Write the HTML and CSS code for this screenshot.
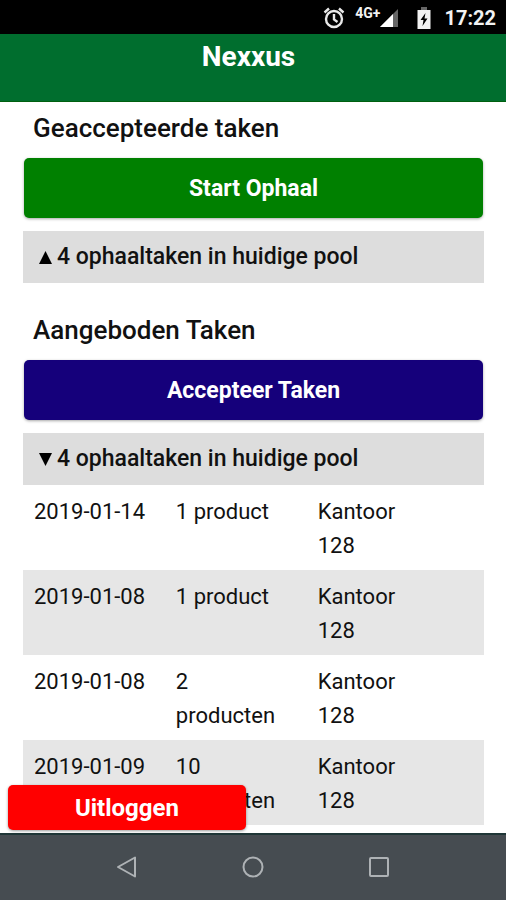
FILE: index.html
```html
<!DOCTYPE html>
<html lang="nl">
<head>
<meta charset="utf-8">
<meta name="viewport" content="width=device-width, initial-scale=1">
<title>Nexxus</title>
<link rel="stylesheet" href="styles.css">
</head>
<body>
<div class="status-bar">
  <svg class="icon-alarm" viewBox="0 0 22 22" width="22" height="22" fill="none" stroke="#e8e8e8" stroke-width="2.400" aria-hidden="true">
    <circle cx="11" cy="12" r="8"/>
    <path d="M11 7v5.500l3.500 2.500M1.500 5.500l4.500-4M20.500 5.500l-4.500-4"/>
  </svg>
  <span class="network">4G+</span>
  <svg class="icon-signal" viewBox="0 0 18 18" width="18" height="18" aria-hidden="true">
    <path d="M0 18L18 0v18z" fill="#666"/>
    <path d="M0 18L13 5v13z" fill="#fff"/>
  </svg>
  <svg class="icon-battery" viewBox="0 0 14 22" width="14" height="22" aria-hidden="true">
    <path d="M4 0h6v3H4z" fill="#666"/>
    <path d="M.5 3h13v19H.5z" fill="#f2f2f2"/>
    <path d="M8.500 6L3.500 13H6.500L5.500 19L10.500 11.500H7.500z" fill="#000"/>
  </svg>
  <time class="clock">17:22</time>
</div>
<header class="app-header"><h1>Nexxus</h1></header>
<div class="screen">
  <main class="content">
    <section class="group">
      <h2>Geaccepteerde taken</h2>
      <button class="action action-start" type="button">Start Ophaal</button>
      <details class="pool">
        <summary><svg viewBox="0 0 13 13" width="13" height="13" aria-hidden="true"><path d="M6.500 0L13 13H0z"/></svg>4 ophaaltaken in huidige pool</summary>
      </details>
    </section>
    <section class="group">
      <h2>Aangeboden Taken</h2>
      <button class="action action-accept" type="button">Accepteer Taken</button>
      <details class="pool" open>
        <summary><svg viewBox="0 0 13 13" width="13" height="13" aria-hidden="true"><path d="M0 0h13L6.500 13z"/></svg>4 ophaaltaken in huidige pool</summary>
        <table class="tasks">
          <tbody>
            <tr><td>2019-01-14</td><td>1 product</td><td>Kantoor 128</td></tr>
            <tr><td>2019-01-08</td><td>1 product</td><td>Kantoor 128</td></tr>
            <tr><td>2019-01-08</td><td>2 producten</td><td>Kantoor 128</td></tr>
            <tr><td>2019-01-09</td><td>10 producten</td><td>Kantoor 128</td></tr>
          </tbody>
        </table>
      </details>
    </section>
  </main>
  <button class="logout" type="button">Uitloggen</button>
</div>
<nav class="system-nav" aria-label="Systeem">
  <button type="button" aria-label="Terug"><svg viewBox="0 0 22 22" width="22" height="22"><path d="M19 1.500v19L2 11z"/></svg></button>
  <button type="button" aria-label="Start"><svg viewBox="0 0 22 22" width="22" height="22"><circle cx="11" cy="11" r="9.500"/></svg></button>
  <button type="button" aria-label="Recent"><svg viewBox="0 0 22 22" width="22" height="22"><rect x="2" y="2" width="18" height="18" rx="1"/></svg></button>
</nav>
</body>
</html>
```
FILE: styles.css
```css
* {
  box-sizing: border-box;
}

body {
  display: flex;
  flex-direction: column;
  height: 100vh;
  margin: 0;
  overflow: hidden;
  background: #fff;
  color: #111;
  font-family: Roboto, "Liberation Sans", sans-serif;
  font-size: 22px;
}

button {
  border: 0;
  font-family: inherit;
  cursor: pointer;
}

.status-bar {
  display: flex;
  flex: none;
  align-items: center;
  justify-content: flex-end;
  height: 34px;
  padding: 2px 10px 0;
  background: #000;
  color: #f2f2f2;
}

.network {
  align-self: flex-start;
  margin-left: 10px;
  padding-top: 3px;
  font-size: 14px;
  font-weight: 700;
  line-height: 16px;
}

.icon-signal {
  align-self: flex-end;
  margin-bottom: 7px;
}

.icon-battery {
  margin: 0 13px 0 19px;
}

.clock {
  font-size: 20px;
  font-weight: 700;
}

.app-header {
  flex: none;
  height: 68px;
  padding: 7px 9px 0 0;
  background: #006e2e;
  border-bottom: 1px solid #00600f;
  color: #fff;
  text-align: center;
}

.app-header h1 {
  margin: 0;
  font-size: 28px;
  font-weight: 700;
  line-height: 32px;
}

.screen {
  position: relative;
  flex: 1;
  min-height: 0;
}

.content {
  height: 100%;
  padding: 8px 22px 0 23px;
  overflow: hidden;
}

.group {
  margin-bottom: 29px;
}

.group h2 {
  margin: 0 0 12px;
  padding: 0 10px;
  font-size: 26px;
  font-weight: 500;
  line-height: 36px;
}

.action {
  display: block;
  width: calc(100% - 2px);
  height: 60px;
  margin: 0 1px 13px;
  border-radius: 5px;
  box-shadow: 0 1px 3px rgba(0, 0, 0, 0.35);
  color: #fff;
  font-size: 23px;
  font-weight: 700;
}

.action-start {
  background: #008000;
}

.action-accept {
  background: #15007b;
}

.pool summary {
  display: flex;
  align-items: center;
  gap: 5px;
  padding: 0 16px;
  background: #ddd;
  font-size: 23px;
  font-weight: 500;
  line-height: 52px;
  list-style: none;
  cursor: pointer;
}

.tasks {
  width: 100%;
  border-collapse: collapse;
  table-layout: fixed;
  line-height: 34px;
}

.tasks td {
  width: calc(100% * 4 / 13);
  padding: 10px 18px 7px 11px;
  vertical-align: top;
}

.tasks td:last-child {
  width: calc(100% * 5 / 13);
  padding-right: 56px;
}

.tasks tr:nth-child(even) {
  background: #e6e6e6;
}

.logout {
  position: absolute;
  bottom: 3px;
  left: 8px;
  width: 47%;
  height: 45px;
  border-radius: 5px;
  background: #f00;
  box-shadow: 0 1px 3px rgba(0, 0, 0, 0.4);
  color: #fff;
  font-size: 24px;
  font-weight: 700;
}

.system-nav {
  display: flex;
  flex: none;
  align-items: center;
  justify-content: center;
  gap: 82px;
  height: 67px;
  padding-bottom: 2px;
  background: #464c51;
  border-top: 2px solid #1f3637;
}

.system-nav button {
  display: flex;
  align-items: center;
  justify-content: center;
  width: 44px;
  height: 44px;
  padding: 0;
  background: none;
}

.system-nav svg {
  fill: none;
  stroke: #aeb2b5;
  stroke-width: 2;
  stroke-linejoin: round;
}
```
